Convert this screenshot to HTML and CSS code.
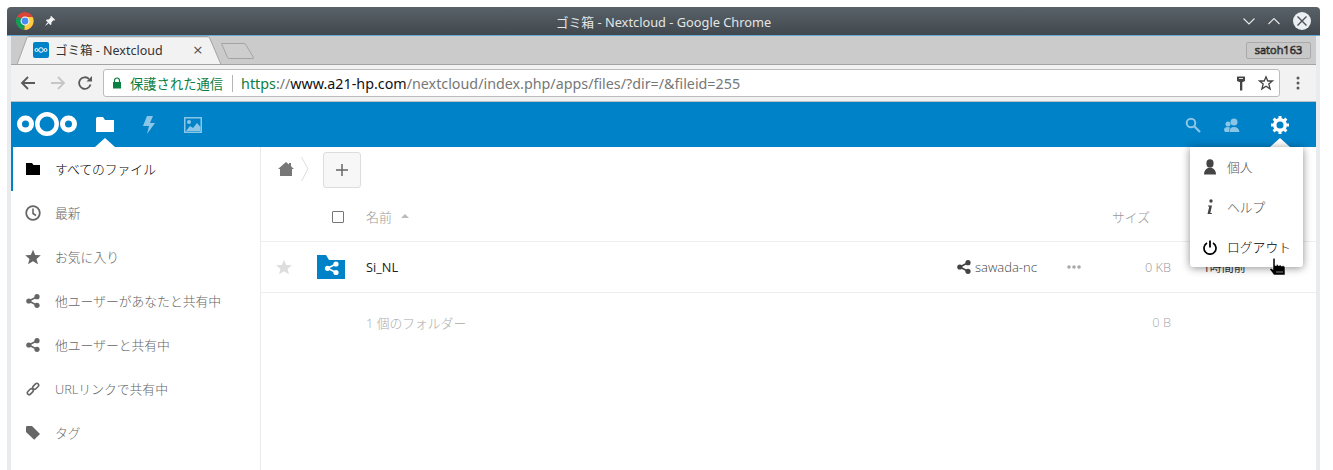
FILE: index.html
```html
<!DOCTYPE html>
<html lang="ja">
<head>
<meta charset="utf-8">
<title>ゴミ箱 - Nextcloud</title>
<link rel="stylesheet" href="styles.css">
</head>
<body>
<div class="window">
  <div class="titlebar">
    <div class="tb-left">
      <svg class="chrome-logo" width="18" height="18" viewBox="0 0 18 18"><circle cx="9" cy="9" r="9" fill="#db4437"/><path d="M9 9 1.200 4.500A9 9 0 0 0 8.500 18z" fill="#0f9d58"/><path d="M9 5h7.600A9 9 0 0 1 8.500 18L9 9z" fill="#ffcd40"/><circle cx="9" cy="9" r="4.400" fill="#fff"/><circle cx="9" cy="9" r="3.400" fill="#4a8af4"/></svg>
      <svg class="pin" width="12" height="12" viewBox="0 0 12 12"><path d="M7 .7 11.300 5 10.200 5.600 9.400 5.200 7.400 7.400 7.400 9.400 6.400 10 2 5.600 2.600 4.600 4.600 4.600 6.800 2.600 6.400 1.800z M3.400 7.400 4.600 8.600 1 11z" fill="#f4f4f4"/></svg>
    </div>
    <div class="tb-title">ゴミ箱 - Nextcloud - Google Chrome</div>
    <div class="tb-controls">
      <svg width="14" height="10" viewBox="0 0 14 10"><path d="M1.500 2.500 7 8l5.500-5.500" fill="none" stroke="#e8e8e8" stroke-width="1.100"/></svg>
      <svg width="14" height="10" viewBox="0 0 14 10"><path d="M1.500 8 7 2.500 12.500 8" fill="none" stroke="#e8e8e8" stroke-width="1.100"/></svg>
      <svg class="tb-close" width="18" height="18" viewBox="0 0 18 18"><circle cx="9" cy="9" r="9" fill="#eceff1"/><path d="M4.500 4.500l9 9M13.500 4.500l-9 9" stroke="#4a5157" stroke-width="1.400"/></svg>
    </div>
  </div>
  <div class="frame">
    <div class="tabstrip">
      <svg class="tab-shape" width="214" height="29" viewBox="0 0 214 29"><path d="M0 28 10 1.500H192L204 28z" fill="#f2f2f2"/><path d="M0 28.500 10 1.500Q10.500.5 12 .5H190Q192 .5 192.500 1.500L204 28.500H214" fill="none" stroke="#a4a4a4"/></svg>
      <div class="tab">
        <span class="favicon"><svg width="14" height="8" viewBox="0 0 14 8"><g fill="none" stroke="#fff"><circle cx="2.500" cy="4" r="1.500"/><circle cx="7" cy="4" r="2.300"/><circle cx="11.500" cy="4" r="1.500"/></g></svg></span>
        <span class="tab-title">ゴミ箱 - Nextcloud</span>
        <span class="tab-close">×</span>
      </div>
      <svg class="newtab" width="36" height="18" viewBox="0 0 36 18"><path d="M1.500 1.500H25L33.500 15.500Q34 16.500 33 16.500H9Q8 16.500 7.500 15.500z" fill="#cdcdcd" stroke="#a3a3a3"/></svg>
      <div class="user-badge">satoh163</div>
    </div>
    <div class="toolbar">
      <svg class="tool tool-back" width="16" height="16" viewBox="0 0 16 16"><path d="M15 8H2M8 2 2 8l6 6" fill="none" stroke="#5a5a5a" stroke-width="1.800"/></svg>
      <svg class="tool tool-fwd" width="16" height="16" viewBox="0 0 16 16"><path d="M1 8h13M8 2l6 6-6 6" fill="none" stroke="#c6c6c6" stroke-width="1.800"/></svg>
      <svg class="tool tool-reload" width="16" height="16" viewBox="0 0 16 16"><path d="M13.500 9.500A5.800 5.800 0 1 1 12 4" fill="none" stroke="#5a5a5a" stroke-width="1.800"/><path d="M9.500 6.500H15V1z" fill="#5a5a5a"/></svg>
      <div class="omnibox">
        <svg class="lock" width="10" height="12" viewBox="0 0 10 12"><path d="M2.500 5V3.500a2.500 2.500 0 0 1 5 0V5" fill="none" stroke="#0b8043" stroke-width="1.200"/><rect x="1" y="5" width="8" height="6.500" fill="#0b8043"/></svg>
        <span class="secure">保護された通信</span>
        <span class="omni-div"></span>
        <span class="url"><span class="url-https">https</span><span class="url-dim">://</span><span class="url-host">www.a21-hp.com</span><span class="url-dim">/nextcloud/index.php/apps/files/?dir=/&amp;fileid=255</span></span>
        <svg class="key" width="8" height="15" viewBox="0 0 8 15"><path d="M0 1Q0 .5.5.5h7q.5 0 .5.500V5L5.300 6.300V14.500H3V6.300L0 5z" fill="#444"/><rect x="2" y="2" width="4" height="1" fill="#ddd"/></svg>
        <svg class="omni-star" width="16" height="16" viewBox="0 0 16 16"><path d="M8 1.800 9.800 6H14.500L10.800 9 12.100 13.900 8 11.200 3.900 13.900 5.200 9 1.500 6H6.200z" fill="none" stroke="#444" stroke-width="1.300"/></svg>
      </div>
      <svg class="tool-menu" width="4" height="14" viewBox="0 0 4 14"><g fill="#5a5a5a"><circle cx="2" cy="2" r="1.500"/><circle cx="2" cy="7" r="1.500"/><circle cx="2" cy="12" r="1.500"/></g></svg>
    </div>
    <div class="app">
      <header class="appbar">
        <svg class="nc-logo" width="60" height="28" viewBox="0 0 60 28"><g fill="none" stroke="#fff"><circle cx="8.500" cy="14" r="6" stroke-width="5"/><circle cx="30" cy="14" r="9.700" stroke-width="4.500"/><circle cx="51.500" cy="14" r="6" stroke-width="5"/></g></svg>
        <nav class="appnav">
          <span class="nav-item nav-active"><svg width="18" height="15" viewBox="0 0 18 15"><path d="M0 1.500Q0 0 1.500 0H7l2 3h9v12H0z" fill="#fff"/></svg></span>
          <span class="nav-item nav-dim"><svg width="14" height="18" viewBox="0 0 14 18"><path d="M5 0h6L8 7h5L5 18l2-8H1z" fill="#fff"/></svg></span>
          <span class="nav-item nav-dim"><svg width="18" height="16" viewBox="0 0 18 16"><path fill="#fff" fill-rule="evenodd" d="M0 0h18v16H0zM1.500 1.500v13h15v-13z"/><circle cx="5" cy="5" r="2" fill="#fff"/><path d="M2 14l4-5 3 2 4-5 3.500 4v4z" fill="#fff"/></svg></span>
        </nav>
        <div class="appbar-right">
          <svg class="dim" width="16" height="16" viewBox="0 0 16 16"><circle cx="6" cy="6" r="4.300" fill="none" stroke="#fff" stroke-width="2"/><path d="M9.500 9.500 15 15" stroke="#fff" stroke-width="2.200"/></svg>
          <svg class="dim contacts" width="16" height="14" viewBox="0 0 16 14"><circle cx="10" cy="4" r="3.500" fill="#fff"/><circle cx="4" cy="6" r="2.500" fill="#fff"/><path d="M0 12q0-3 4-3 1 0 2 .5Q5 11 5 14H1zM5.500 14q0-5 4.500-5t5.500 5z" fill="#fff"/></svg>
          <svg class="gear" width="18" height="18" viewBox="0 0 18 18"><circle cx="9" cy="9" r="5.200" fill="none" stroke="#fff" stroke-width="3.400"/><g stroke="#fff" stroke-width="3"><path d="M9 0v3M9 15v3M0 9h3M15 9h3M2.600 2.600l2.100 2.100M13.300 13.300l2.100 2.100M15.400 2.600l-2.100 2.100M4.700 13.300l-2.100 2.100"/></g></svg>
        </div>
      </header>
      <div class="app-body">
        <aside class="sidebar">
          <a class="side-item side-active"><svg width="14" height="12" viewBox="0 0 14 12"><path d="M0 0h6l1.500 2H14v10H0z" fill="#000"/></svg><span>すべてのファイル</span></a>
          <a class="side-item"><svg width="16" height="16" viewBox="0 0 16 16"><circle cx="8" cy="8" r="6.800" fill="none" stroke="#666" stroke-width="1.800"/><path d="M8 3.500V8.500l3 2" fill="none" stroke="#666" stroke-width="1.600"/></svg><span>最新</span></a>
          <a class="side-item"><svg width="16" height="16" viewBox="0 0 16 16"><path d="M8 .8 10.200 6 15.800 6.300 11.500 9.900 13 15.300 8 12.300 3 15.300 4.500 9.900.2 6.300 5.800 6z" fill="#666"/></svg><span>お気に入り</span></a>
          <a class="side-item"><svg width="14" height="14" viewBox="0 0 14 14"><g fill="#666"><circle cx="11" cy="2.700" r="2.600"/><circle cx="11" cy="11.300" r="2.600"/><circle cx="2.800" cy="7" r="2.600"/></g><path d="M11 2.700 2.800 7 11 11.300" fill="none" stroke="#666" stroke-width="1.600"/></svg><span>他ユーザーがあなたと共有中</span></a>
          <a class="side-item"><svg width="14" height="14" viewBox="0 0 14 14"><g fill="#666"><circle cx="11" cy="2.700" r="2.600"/><circle cx="11" cy="11.300" r="2.600"/><circle cx="2.800" cy="7" r="2.600"/></g><path d="M11 2.700 2.800 7 11 11.300" fill="none" stroke="#666" stroke-width="1.600"/></svg><span>他ユーザーと共有中</span></a>
          <a class="side-item"><svg width="14" height="14" viewBox="0 0 14 14"><g fill="none" stroke="#666" stroke-width="1.600"><rect x="-3.400" y="-1.800" width="6.800" height="3.600" rx="1.800" transform="translate(4.300 9.700) rotate(-45)"/><rect x="-3.400" y="-1.800" width="6.800" height="3.600" rx="1.800" transform="translate(9.700 4.300) rotate(-45)"/></g></svg><span>URLリンクで共有中</span></a>
          <a class="side-item"><svg width="14" height="14" viewBox="0 0 14 14"><path d="M0 1.200Q0 0 1.200 0H6l8 8-5.800 5.800L0 6z" fill="#666"/></svg><span>タグ</span></a>
        </aside>
        <main class="files">
          <div class="crumbs">
            <svg class="home" width="16" height="14" viewBox="0 0 16 14"><path d="M8 0 11 2.500V1h2v3.200L16 7H14V14H2V7H0z" fill="#777"/></svg>
            <svg class="chev" width="8" height="24" viewBox="0 0 8 24"><path d="M.5 0 7 12 .5 24" fill="none" stroke="#ddd"/></svg>
            <button class="add-btn"><svg width="12" height="12" viewBox="0 0 12 12"><path d="M6 0v12M0 6h12" stroke="#666" stroke-width="1.500"/></svg></button>
          </div>
          <div class="row head-row">
            <span class="c-star"></span>
            <span class="c-icon"><span class="check"></span></span>
            <span class="c-name head-name">名前<i class="sort"></i></span>
            <span class="c-share"></span>
            <span class="c-more"></span>
            <span class="c-size head-size">サイズ</span>
            <span class="c-date"></span>
          </div>
          <div class="row file-row">
            <span class="c-star"><svg width="16" height="16" viewBox="0 0 16 16"><path d="M8 .8 10.200 6 15.800 6.300 11.500 9.900 13 15.300 8 12.300 3 15.300 4.500 9.900.2 6.300 5.800 6z" fill="#ddd"/></svg></span>
            <span class="c-icon"><svg class="folder" width="28" height="24" viewBox="0 0 28 24"><path d="M0 0h9l3 5h16v19H0z" fill="#0082c9"/><g fill="#fff"><circle cx="19" cy="9" r="2.600"/><circle cx="19" cy="17.500" r="2.600"/><circle cx="10.500" cy="13.300" r="2.600"/></g><path d="M19 9 10.500 13.300 19 17.500" fill="none" stroke="#fff" stroke-width="1.600"/></svg></span>
            <span class="c-name file-name">Si_NL</span>
            <span class="c-share share-txt"><svg width="14" height="14" viewBox="0 0 14 14"><g fill="#444"><circle cx="11" cy="2.700" r="2.600"/><circle cx="11" cy="11.300" r="2.600"/><circle cx="2.800" cy="7" r="2.600"/></g><path d="M11 2.700 2.800 7 11 11.300" fill="none" stroke="#444" stroke-width="1.600"/></svg>sawada-nc</span>
            <span class="c-more"><svg width="14" height="4" viewBox="0 0 14 4"><g fill="#aaa"><circle cx="2" cy="2" r="1.800"/><circle cx="7" cy="2" r="1.800"/><circle cx="12" cy="2" r="1.800"/></g></svg></span>
            <span class="c-size size-txt">0 KB</span>
            <span class="c-date date-txt">1時間前</span>
          </div>
          <div class="row sum-row">
            <span class="c-star"></span>
            <span class="c-icon"></span>
            <span class="c-name">1 個のフォルダー</span>
            <span class="c-share"></span>
            <span class="c-more"></span>
            <span class="c-size">0 B</span>
            <span class="c-date"></span>
          </div>
        </main>
      </div>
      <div class="settings-menu">
        <a class="menu-item"><svg width="14" height="16" viewBox="0 0 14 16"><ellipse cx="7" cy="4.500" rx="3.600" ry="4.200" fill="#444"/><path d="M1 15.500q0-5 4-6.500h4q4 1.500 4 6.500z" fill="#444"/></svg><span>個人</span></a>
        <a class="menu-item"><svg width="14" height="16" viewBox="0 0 14 16"><circle cx="8" cy="2" r="1.700" fill="#444"/><path d="M5 6.500h4l-1.700 7.500h1.500v1H4.500l1.800-7.500H5z" fill="#444"/></svg><span>ヘルプ</span></a>
        <a class="menu-item menu-strong"><svg width="14" height="15" viewBox="0 0 14 15"><path d="M7 .5v7" stroke="#000" stroke-width="1.800" fill="none"/><path d="M4 3A6 6 0 1 0 10 3" stroke="#000" stroke-width="1.700" fill="none"/></svg><span>ログアウト</span></a>
      </div>
      <svg class="cursor" width="17" height="18" viewBox="0 0 17 18"><path d="M4 1Q4 .3 5 .3T6 1V7.500H7.500V6.500H9V7.500H10.500V7H12V8H13.500V7.800H15L16 9.500V17H5L.8 11.500 2 10 4 11.500z" fill="#000" stroke="#fff" stroke-width=".5"/><path d="M7 14h7" stroke="#888" stroke-width="1"/></svg>
    </div>
  </div>
</div>
</body>
</html>
```
FILE: styles.css
```css
* { box-sizing: border-box; }
html, body { margin: 0; height: 100%; overflow: hidden; background: #fff; }
body { font-family: "Open Sans", "Noto Sans CJK JP", sans-serif; font-size: 13px; }
svg { display: block; flex: none; }

.window { margin: 7px 13px 0 7px; height: 463px; display: flex; flex-direction: column; border-radius: 4px 4px 0 0; overflow: hidden; }

.titlebar { height: 29px; flex: none; display: flex; align-items: center; justify-content: space-between; position: relative; background: linear-gradient(#5a6269, #40474d); border-bottom: 1px solid #66a9d4; padding: 0 9px; }
.tb-left { display: flex; align-items: center; gap: 10px; }
.tb-title { position: absolute; left: 0; right: 0; text-align: center; color: #e3e5e6; font-family: "Noto Sans", "Noto Sans CJK JP", sans-serif; font-size: 12.800px; }
.tb-controls { display: flex; align-items: center; gap: 11px; position: relative; }
.tb-close { margin-left: 1px; }

.frame { flex: 1; min-height: 0; display: flex; flex-direction: column; margin: 0 4px; box-shadow: 0 0 0 4px #e9ecef; }

.tabstrip { height: 29px; flex: none; background: #cbcbcb; border-bottom: 1px solid #a4a4a4; display: flex; align-items: center; position: relative; padding-left: 22px; }
.tab-shape { position: absolute; left: 6px; top: 0; }
.tab { position: relative; display: flex; align-items: center; width: 176px; height: 28px; }
.favicon { width: 16px; height: 16px; border-radius: 2px; background: #0082c9; display: flex; align-items: center; justify-content: center; }
.tab-title { margin-left: 6px; margin-top: -2px; color: #333; font-family: "Noto Sans", "Noto Sans CJK JP", sans-serif; font-size: 12.500px; white-space: nowrap; }
.tab-close { position: absolute; left: 160px; color: #555; font-size: 17px; line-height: 28px; }
.newtab { position: relative; margin-left: 11px; margin-top: 2px; }
.user-badge { margin-left: auto; margin-right: 5px; width: 65px; height: 17px; border: 1px solid #aaa; border-radius: 2px; background: #c8c8c8; color: #f0f0f0; font-size: 11px; line-height: 14px; text-align: center; -webkit-text-stroke: .7px #222; }

.toolbar { height: 37px; flex: none; background: #f2f2f2; border-bottom: 1px solid #c0c0c0; display: flex; align-items: center; padding-left: 9px; font-family: "Noto Sans", "Noto Sans CJK JP", sans-serif; }
.tool-fwd { margin-left: 14px; }
.tool-reload { margin-left: 11px; }
.omnibox { margin-left: 10px; width: 1177px; height: 28px; background: #fff; border: 1px solid #bcbcbc; border-radius: 3px; display: flex; align-items: center; padding-left: 8px; }
.secure { margin-left: 8px; color: #0b8043; font-size: 13.300px; white-space: nowrap; }
.omni-div { width: 1px; height: 17px; background: #b5b5b5; margin: 0 8px 0 9px; }
.url { font-size: 14.300px; white-space: nowrap; }
.url-https { color: #0b8043; }
.url-dim { color: #777; }
.url-host { color: #111; }
.key { margin-left: auto; }
.omni-star { margin: 0 5px 0 13px; }
.tool-menu { margin-left: 16px; }

.app { flex: 1; min-height: 0; position: relative; display: flex; flex-direction: column; background: #fff; }
.appbar { height: 45px; flex: none; background: #0082c9; display: flex; align-items: center; padding-left: 6px; }
.nc-logo { margin-top: -2px; }
.appnav { display: flex; align-items: center; margin-left: 6px; }
.nav-item { width: 44px; height: 45px; display: flex; align-items: center; justify-content: center; position: relative; }
.nav-active::after { content: ""; position: absolute; left: 50%; bottom: 0; margin-left: -10px; border: 10px solid transparent; border-top: 0; border-bottom: 9px solid #fff; }
.nav-dim svg { opacity: .55; }
.appbar-right { margin-left: auto; display: flex; align-items: center; position: relative; padding-right: 27px; }
.dim { opacity: .55; }
.contacts { margin-left: 23px; }
.gear { margin-left: 31px; }
.appbar-right::after { content: ""; position: absolute; right: 26px; top: 22px; border: 10px solid transparent; border-top: 0; border-bottom: 9px solid #fff; z-index: 1; }

.app-body { flex: 1; min-height: 0; display: flex; }
.sidebar { width: 250px; flex: none; border-right: 1px solid #eaeaea; }
.side-item { display: flex; align-items: center; height: 44px; padding-left: 14px; color: #666; font-size: 12.800px; font-weight: 300; position: relative; }
.side-item span { margin-top: -1px; }
.side-item svg { width: 16px; margin-right: 14px; }
.side-active { color: #000; box-shadow: inset 2px 0 0 #0082c9; }

.files { flex: 1; min-width: 0; }
.crumbs { height: 46px; display: flex; align-items: center; padding-left: 17px; }
.home { margin-top: -3px; }
.chev { margin-left: 7px; margin-top: -2px; }
.add-btn { margin-left: 14px; width: 38px; height: 36px; display: flex; align-items: center; justify-content: center; background: #f7f7f7; border: 1px solid #ddd; border-radius: 3px; padding: 0; }

.row { display: grid; grid-template-columns: 47px 58px 591px 110px 54px 50px 1fr; align-items: center; color: #aaa; font-size: 12.800px; font-weight: 300; }
.row > span { display: flex; align-items: center; }
.c-star { padding-left: 15px; }
.c-icon { padding-left: 9px; }
.c-share { white-space: nowrap; }
.c-size { justify-content: flex-end; white-space: nowrap; }
.c-date { padding-left: 32px; white-space: nowrap; }
.head-row { height: 49px; border-bottom: 1px solid #eee; }
.check { width: 12px; height: 12px; border: 1px solid #777; border-radius: 1px; background: #fff; margin-left: 15px; }
.head-name { color: #999; margin-top: -2px; font-size: 13px; }
.head-size { margin: -2px 21px 0 -21px; color: #999; }
.sort { width: 0; height: 0; margin-left: 9px; border: 4px solid transparent; border-top: 0; border-bottom: 4px solid #bbb; }
.file-row { height: 51px; border-bottom: 1px solid #eee; }
.file-name { color: #222; font-weight: 400; }
.share-txt { color: #444; gap: 4px; font-size: 13px; }
.size-txt { color: #999; }
.date-txt { color: #333; font-size: 12px; font-weight: 400; }
.sum-row { height: 58px; }

.settings-menu { position: absolute; left: 1179px; top: 45px; width: 113px; height: 120px; background: #fff; border-radius: 0 0 3px 3px; box-shadow: 0 1px 8px rgba(0,0,0,.45); z-index: 2; }
.menu-item { display: flex; align-items: center; height: 40px; padding-left: 13px; color: #555; font-size: 12.800px; font-weight: 300; }
.menu-item span { margin-top: -2px; }
.menu-item svg { width: 14px; margin-right: 10px; }
.menu-strong { color: #000; }
.cursor { position: absolute; left: 1258px; top: 156px; z-index: 3; }
```
